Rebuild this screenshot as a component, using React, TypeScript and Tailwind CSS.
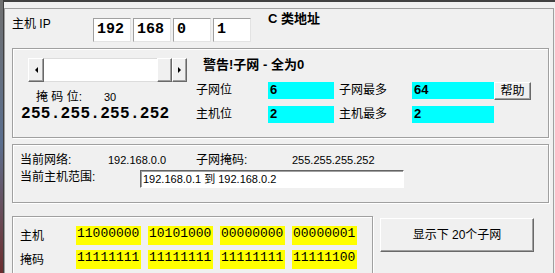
import React from "react";

const raised =
  "bg-[#f0f0f0] border border-t-white border-l-white border-b-[#696969] border-r-[#696969] shadow-[inset_-1px_-1px_0_#a0a0a0]";
const group =
  "border border-[#a0a0a0] shadow-[inset_1px_1px_0_#ffffff,1px_1px_0_#ffffff]";

function Cyan({ w, v }: { w: string; v: string }) {
  return (
    <div className={`${w} h-[17px] bg-[#00ffff] pl-[2px] font-bold text-[13px] leading-[16px]`}>
      {v}
    </div>
  );
}

function Bits({ v }: { v: string }) {
  return (
    <div className="w-[65px] h-[19px] bg-[#ffff00] pl-[1px] font-['Liberation_Mono',monospace] text-[13px] leading-[15px]">
      {v}
    </div>
  );
}

export default function App() {
  return (
    <div className="w-[555px] h-[273px] overflow-hidden bg-[#f0f0f0] flex flex-col text-black font-['Liberation_Sans','Noto_Sans_CJK_SC',sans-serif]">
      <div className="h-px bg-[#9c9c9c]" />
      <div className="flex flex-1">
        <div className="w-[3px] bg-linear-to-b from-[#707070] via-[#5a6e8e] to-[#6a2424]" />
        <div className="flex-1 border-l border-t-2 border-[#404040] flex flex-col">
          <div className="mt-[6px] mr-[1px] flex-1 border-l border-t border-r border-[#a0a0a0] flex flex-col">
            {/* Row 1: host IP */}
            <div className="h-[39px] flex items-start">
              <div className="ml-[7px] mt-[7px] w-[81px] text-[12px] leading-[16px]">主机 IP</div>
              <div className="flex gap-[2px] mt-[9px]">
                {["192", "168", "0", "1"].map((o, i) => (
                  <div
                    key={i}
                    className="w-[38px] h-[24px] bg-white border border-[#a0a0a0] border-b-[#e3e3e3] border-r-[#e3e3e3] pl-[3px] font-['Liberation_Mono',monospace] font-bold text-[15px] leading-[22px]"
                  >
                    {o}
                  </div>
                ))}
              </div>
              <div className="ml-[17px] mt-[2px] font-bold text-[13px] leading-[16px]">C 类地址</div>
            </div>

            {/* Group 1 */}
            <div className={`ml-[7px] w-[537px] h-[90px] flex ${group}`}>
              <div className="w-[183px] flex flex-col">
                <div className="ml-[15px] mt-[9px] w-[159px] h-[24px] flex">
                  <div className={`w-[16px] h-full flex items-center justify-center ${raised}`}>
                    <div className="w-0 h-0 border-y-[3px] border-y-transparent border-r-[3px] border-r-black" />
                  </div>
                  <div className="flex-1 bg-white border-y border-[#dcdcdc]" />
                  <div className={`w-[15px] h-full ${raised}`} />
                  <div className={`w-[15px] h-full flex items-center justify-center ${raised}`}>
                    <div className="w-0 h-0 border-y-[3px] border-y-transparent border-l-[3px] border-l-black" />
                  </div>
                </div>
                <div className="mt-[7px] h-[16px] flex text-[12px] leading-[16px]">
                  <div className="ml-[23px] w-[68px]">掩 码 位:</div>
                  <div className="text-[11px]">30</div>
                </div>
                <div className="mt-[-1px] ml-[8px] font-['Liberation_Mono',monospace] font-bold text-[16px] leading-[20px] tracking-[0.3px]">
                  255.255.255.252
                </div>
              </div>
              <div className="flex flex-col">
                <div className="ml-[7px] mt-[8px] font-bold text-[13px] leading-[16px]">警告!子网 - 全为0</div>
                <div className="mt-[9px] flex items-start text-[12px] leading-[17px]">
                  <div className="w-[72px]">子网位</div>
                  <Cyan w="w-[66px]" v="6" />
                  <div className="ml-[5px] w-[73px]">子网最多</div>
                  <Cyan w="w-[82px]" v="64" />
                  <div className={`w-[37px] h-[18px] flex items-center justify-center text-[12px] leading-[14px] ${raised}`}>
                    帮助
                  </div>
                </div>
                <div className="mt-[6px] flex items-start text-[12px] leading-[17px]">
                  <div className="w-[72px]">主机位</div>
                  <Cyan w="w-[66px]" v="2" />
                  <div className="ml-[5px] w-[73px]">主机最多</div>
                  <Cyan w="w-[82px]" v="2" />
                </div>
              </div>
            </div>

            {/* Group 2 */}
            <div className={`ml-[7px] mt-[6px] w-[537px] h-[59px] flex flex-col text-[12px] ${group}`}>
              <div className="mt-[7px] ml-[7px] flex h-[16px] leading-[16px]">
                <div className="w-[88px]">当前网络:</div>
                <div className="w-[88px] text-[11px]">192.168.0.0</div>
                <div className="w-[96px]">子网掩码:</div>
                <div className="text-[11px]">255.255.255.252</div>
              </div>
              <div className="mt-[1px] ml-[7px] flex items-start">
                <div className="w-[120px] leading-[16px]">当前主机范围:</div>
                <div className="mt-[1px] w-[264px] h-[18px] bg-white border border-[#646464] border-b-white border-r-white shadow-[inset_1px_1px_0_#a0a0a0] pl-[2px] text-[11px] leading-[16px]">
                  192.168.0.1 到 192.168.0.2
                </div>
              </div>
            </div>

            {/* Group 3 + button */}
            <div className="mt-[13px] ml-[7px] flex items-start">
              <div className={`w-[361px] h-[70px] flex flex-col ${group}`}>
                <div className="mt-[9px] flex items-center h-[19px]">
                  <div className="ml-[7px] w-[56px] text-[12px] leading-[16px]">主机</div>
                  <div className="flex gap-[7px]">
                    <Bits v="11000000" />
                    <Bits v="10101000" />
                    <Bits v="00000000" />
                    <Bits v="00000001" />
                  </div>
                </div>
                <div className="mt-[5px] flex items-center h-[19px]">
                  <div className="ml-[7px] w-[56px] text-[12px] leading-[16px]">掩码</div>
                  <div className="flex gap-[7px]">
                    <Bits v="11111111" />
                    <Bits v="11111111" />
                    <Bits v="11111111" />
                    <Bits v="11111100" />
                  </div>
                </div>
              </div>
              <div className={`ml-[7px] mt-[2px] w-[154px] h-[34px] flex items-center justify-center text-[12px] leading-[16px] ${raised}`}>
                显示下 20个子网
              </div>
            </div>
          </div>
        </div>
      </div>
    </div>
  );
}
